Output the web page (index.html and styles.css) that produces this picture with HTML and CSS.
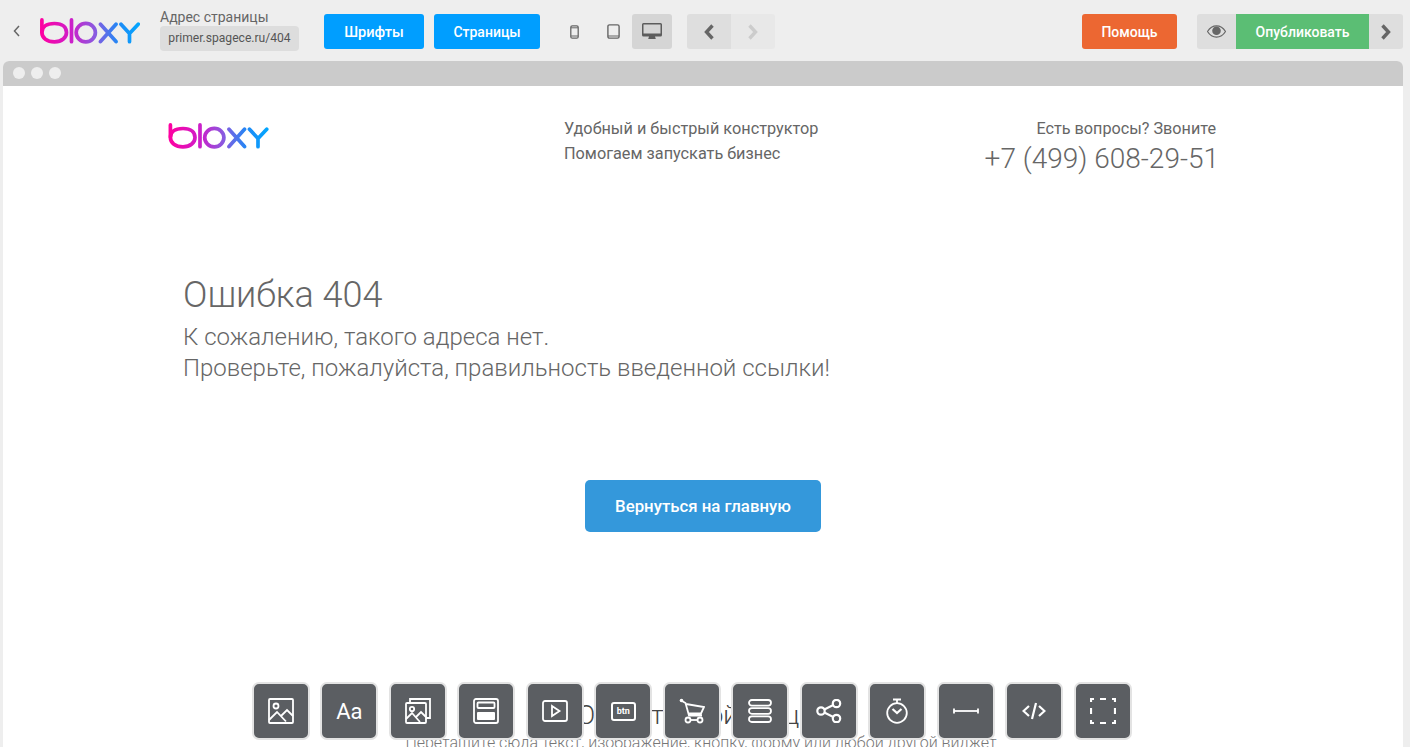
FILE: index.html
```html
<!DOCTYPE html>
<html lang="ru">
<head>
<meta charset="utf-8">
<title>bloxy</title>
<link rel="stylesheet" href="styles.css">
</head>
<body>
<svg class="defs" width="0" height="0" aria-hidden="true">
  <defs>
    <linearGradient id="lg" gradientUnits="userSpaceOnUse" x1="0" y1="0" x2="100" y2="0">
      <stop offset="0" stop-color="#ff00a0"/><stop offset=".3" stop-color="#d01cc8"/><stop offset=".55" stop-color="#8a5ae0"/><stop offset=".78" stop-color="#2088f5"/><stop offset="1" stop-color="#00a8ff"/>
    </linearGradient>
    <symbol id="logo" viewBox="0 0 100 26">
      <g fill="none" stroke="url(#lg)" stroke-width="3.700" stroke-linecap="round">
        <path d="M1.900 1.900V14"/><path d="M1.900 14.500C1.900 9 6 5.500 14.500 5.500S26.500 9.500 26.500 14.500 22 23.800 14.500 23.800 1.900 20 1.900 14.500Z"/>
        <path d="M31.500 1.900V23.700"/>
        <ellipse cx="45.800" cy="14.600" rx="9.600" ry="9.200"/>
        <path d="M60.500 6.200L76 23.600M76 6.200L60.500 23.600"/>
        <path d="M81 6.200L89.500 15.500 98.200 6.200M89.500 15.500V23.700"/>
      </g>
    </symbol>
  </defs>
</svg>
<header class="topbar">
  <svg class="back" width="9" height="14" viewBox="0 0 9 14"><path d="M7 2L2.500 7 7 12" fill="none" stroke="#666" stroke-width="1.500"/></svg>
  <svg class="logo-top" width="100" height="26"><use href="#logo"/></svg>
  <div class="address">
    <div class="address-label">Адрес страницы</div>
    <div class="address-chip">primer.spagece.ru/404</div>
  </div>
  <a class="btn btn-blue btn-fonts">Шрифты</a>
  <a class="btn btn-blue btn-pages">Страницы</a>
  <div class="devices">
    <span class="device device-phone"><svg width="9" height="14" viewBox="0 0 9 14"><rect x=".8" y=".8" width="7.400" height="12.400" rx="1.500" fill="none" stroke="#666" stroke-width="1.300"/><path d="M1 2.800h7M1 11h7" stroke="#666"/></svg></span>
    <span class="device device-tablet"><svg width="13" height="15" viewBox="0 0 13 15"><rect x=".9" y=".9" width="11.200" height="13.200" rx="1.600" fill="none" stroke="#666" stroke-width="1.400"/><path d="M1 12h11" stroke="#666"/></svg></span>
    <span class="device device-desktop active"><svg width="20" height="17" viewBox="0 0 20 17"><path d="M1.500 0h17A1.500 1.500 0 0 1 20 1.500V12a1.500 1.500 0 0 1-1.500 1.500h-17A1.500 1.500 0 0 1 0 12V1.500A1.500 1.500 0 0 1 1.500 0ZM1.500 1.500V10.500H18.500V1.500ZM7 13.500h6l.8 2.500H6.200Z" fill="#5c5c5c" fill-rule="evenodd"/></svg></span>
  </div>
  <div class="history">
    <span class="hist hist-prev"><svg width="12" height="16" viewBox="0 0 12 16"><path d="M9.500 1.500L3.500 8l6 6.500" fill="none" stroke="#666" stroke-width="3.400"/></svg></span>
    <span class="hist hist-next"><svg width="12" height="16" viewBox="0 0 12 16"><path d="M2.500 1.500l6 6.500-6 6.500" fill="none" stroke="#ccc" stroke-width="3.400"/></svg></span>
  </div>
  <a class="btn btn-help">Помощь</a>
  <div class="publish">
    <span class="publish-eye"><svg width="19" height="13" viewBox="0 0 19 13"><path d="M.5 6.500C3 2.500 6 .8 9.500.8S16 2.500 18.500 6.500C16 10.500 13 12.200 9.500 12.200S3 10.500.5 6.500Z" fill="none" stroke="#666" stroke-width="1.200"/><circle cx="9.500" cy="5.800" r="4.300" fill="#666"/></svg></span>
    <a class="publish-go">Опубликовать</a>
    <span class="publish-more"><svg width="12" height="16" viewBox="0 0 12 16"><path d="M2.500 1.500l6 6.500-6 6.500" fill="none" stroke="#666" stroke-width="3.400"/></svg></span>
  </div>
</header>
<main class="frame">
  <div class="frame-bar"><i class="dot"></i><i class="dot"></i><i class="dot"></i></div>
  <div class="page">
    <section class="site-head">
      <svg class="logo-site" width="101" height="26"><use href="#logo"/></svg>
      <div class="tagline"><p>Удобный и быстрый конструктор</p><p>Помогаем запускать бизнес</p></div>
      <div class="contact"><p class="contact-q">Есть вопросы? Звоните</p><p class="contact-phone">+7 (499) 608-29-51</p></div>
    </section>
    <section class="error">
      <h1>Ошибка 404</h1>
      <p>К сожалению, такого адреса нет.<br>Проверьте, пожалуйста, правильность введенной ссылки!</p>
    </section>
    <div class="home-wrap"><a class="home-btn">Вернуться на главную</a></div>
    <section class="drop">
      <h2>Область этой секции</h2>
      <p>Перетащите сюда текст, изображение, кнопку, форму или любой другой виджет</p>
    </section>
  </div>
</main>
<nav class="widgets">
  <a class="tile"><svg width="26" height="26" viewBox="0 0 26 26" class="ic"><rect x="1" y="1" width="24" height="24" rx="1"/><circle cx="8" cy="8" r="2.500"/><path d="M1 22l8-8 9 9.500M13 18l6-6 6 6"/></svg></a>
  <a class="tile tile-text">Aa</a>
  <a class="tile"><svg width="26" height="26" viewBox="0 0 26 26" class="ic"><path d="M5 4V1h20v19h-4"/><rect x="1" y="5" width="20" height="20" rx="1"/><circle cx="7" cy="11" r="2.200"/><path d="M1 21l6-6 8 9M11 19l5-5 5 5"/></svg></a>
  <a class="tile"><svg width="26" height="26" viewBox="0 0 26 26" class="ic"><rect x="1" y="1" width="24" height="24" rx="2"/><rect x="4.500" y="4.500" width="17" height="5.500" rx="1"/><rect x="4" y="14" width="18" height="8" rx="1" class="ic-fill"/></svg></a>
  <a class="tile"><svg width="26" height="22" viewBox="0 0 26 22" class="ic"><rect x="1" y="1" width="24" height="20" rx="2"/><path d="M10 6l7.500 5-7.500 5Z"/></svg></a>
  <a class="tile"><span class="btn-ic">btn</span></a>
  <a class="tile"><svg width="26" height="26" viewBox="0 0 26 26" class="ic"><circle cx="2.500" cy="2.500" r="1.800" class="ic-fill"/><path d="M3 3l3.500 2 3.500 12.500h13M7 6l18 3-3 6.500H9"/><circle cx="9" cy="22" r="2.500"/><circle cx="21" cy="22" r="2.500"/><path d="M11.500 22h7"/></svg></a>
  <a class="tile"><svg width="24" height="24" viewBox="0 0 24 24" class="ic"><rect x="1" y="1" width="22" height="5.600" rx="2.800"/><rect x="1" y="9.200" width="22" height="5.600" rx="2.800"/><rect x="1" y="17.400" width="22" height="5.600" rx="2.800"/></svg></a>
  <a class="tile"><svg width="26" height="24" viewBox="0 0 26 24" class="ic ic-bold"><circle cx="5" cy="12" r="3.700"/><circle cx="20.500" cy="4.500" r="3.700"/><circle cx="20.500" cy="19.500" r="3.700"/><path d="M8.300 10.400l9-4.300M8.300 13.600l9 4.300"/></svg></a>
  <a class="tile"><svg width="22" height="26" viewBox="0 0 22 26" class="ic"><circle cx="11" cy="15" r="9.800"/><path d="M7 1.500h8M11 1.500V5"/><path d="M6.500 11l4.500 4 4.500-4" stroke-width="2.200"/></svg></a>
  <a class="tile"><svg width="26" height="8" viewBox="0 0 26 8" class="ic"><path d="M1 4h24"/><path d="M1 1.500v5M25 1.500v5"/></svg></a>
  <a class="tile"><svg width="24" height="18" viewBox="0 0 24 18" class="ic ic-bold"><path d="M7 4L1.500 9 7 14M17 4l5.500 5L17 14M14 1l-4 16"/></svg></a>
  <a class="tile"><svg width="26" height="26" viewBox="0 0 26 26" class="ic ic-bold"><path d="M1 4V1h3M10 1h6M22 1h3v3M25 10v6M25 22v3h-3M16 25h-6M4 25H1v-3M1 16v-6"/></svg></a>
</nav>
</body>
</html>
```
FILE: styles.css
```css
* { box-sizing: border-box; }
html, body { margin: 0; height: 100%; overflow: hidden; }
body { position: relative; width: 1410px; height: 747px; background: #eee; font-family: Roboto, "Liberation Sans", sans-serif; color: #666; }
p, h1, h2 { margin: 0; font-weight: 400; }
a { display: block; text-decoration: none; }
.defs { position: absolute; }

.topbar { display: flex; align-items: flex-start; height: 61px; padding-left: 12px; }
.back { margin-top: 24px; }
.logo-top { margin: 18px 0 0 19px; }
.address { margin: 9px 0 0 20px; width: 139px; }
.address-label { font-size: 14px; line-height: 16px; color: #666; white-space: nowrap; }
.address-chip { height: 25px; margin-top: 1px; background: #ddd; border-radius: 4px; font-size: 12.100px; line-height: 25px; color: #555; text-align: center; white-space: nowrap; }

.btn { height: 35px; margin-top: 14px; border-radius: 3px; color: #fff; font-size: 14px; font-weight: 500; line-height: 36px; text-align: center; }
.btn-blue { background: #009eff; }
.btn-fonts { width: 100px; margin-left: 25px; font-size: 14.600px; }
.btn-pages { width: 106px; margin-left: 10px; }
.devices { display: flex; margin: 14px 0 0 14px; }
.device { display: flex; align-items: center; justify-content: center; height: 35px; border-radius: 3px; }
.device-phone { width: 40px; }
.device-tablet { width: 38px; }
.device-desktop { width: 40px; }
.device.active { background: #d5d5d5; }
.history { display: flex; margin: 14px 0 0 15px; }
.hist { display: flex; align-items: center; justify-content: center; width: 44px; height: 35px; }
.hist-prev { background: #dedede; border-radius: 3px 0 0 3px; }
.hist-next { background: #e8e8e8; border-radius: 0 3px 3px 0; }
.btn-help { width: 95px; margin-left: 307px; background: #ec6732; }
.publish { display: flex; width: 206px; height: 35px; margin: 14px 0 0 20px; background: #dedede; border-radius: 3px; }
.publish-eye { display: flex; align-items: center; justify-content: center; width: 39px; }
.publish-go { width: 133px; background: #5bbe74; color: #fff; font-size: 14px; font-weight: 500; line-height: 36px; text-align: center; }
.publish-more { display: flex; align-items: center; justify-content: center; width: 34px; }

.frame { margin: 0 7px 0 3px; height: 686px; background: #fff; border-radius: 6px 6px 0 0; overflow: hidden; }
.frame-bar { display: flex; gap: 6px; align-items: center; height: 25px; padding: 0 0 2px 10px; background: #cbcbcb; }
.dot { width: 12px; height: 12px; border-radius: 50%; background: #eee; }
.page { height: 661px; }

.site-head { display: grid; grid-template-columns: 395px 1fr auto; padding: 30px 187px 0 166px; color: #666; }
.logo-site { margin: 7px 0 0 -1px; }
.tagline { font-size: 16.250px; line-height: 25px; }
.contact { text-align: right; }
.contact-q { font-size: 16.200px; line-height: 26px; }
.contact-phone { font-size: 28px; font-weight: 300; line-height: 34px; margin-right: -3px; }

.error { margin: 97px 0 0 180px; }
.error h1 { font-size: 36px; font-weight: 300; line-height: 44px; color: #666; }
.error p { margin-top: 5px; font-size: 24px; font-weight: 300; line-height: 31px; color: #666; }

.home-wrap { display: flex; justify-content: center; margin-top: 96px; }
.home-btn { width: 236px; height: 52px; background: #3498db; border-radius: 5px; color: #fff; font-size: 16.800px; font-weight: 500; line-height: 52px; text-align: center; }

.drop { margin-top: 167px; text-align: center; }
.drop h2 { font-size: 26px; font-weight: 300; line-height: 32px; color: #444; }
.drop p { margin-top: 2px; padding-right: 4px; font-size: 16px; font-weight: 300; line-height: 20px; color: #777; }

.widgets { position: absolute; left: 251.800px; top: 682px; display: flex; gap: 10.500px; }
.tile { display: flex; align-items: center; justify-content: center; width: 58px; height: 58px; background: #5b5e62; border: 2px solid #e3e3e3; border-radius: 7px; color: #fff; }
.tile-text { font-size: 22px; font-weight: 400; }
.ic { fill: none; stroke: #fff; stroke-width: 1.800; }
.ic .ic-fill { fill: #fff; stroke: none; }
.ic-bold { stroke-width: 2.200; }
.btn-ic { width: 25px; height: 19px; border: 2px solid #fff; border-radius: 3px; font-size: 9px; font-weight: 700; line-height: 15px; text-align: center; }
```
